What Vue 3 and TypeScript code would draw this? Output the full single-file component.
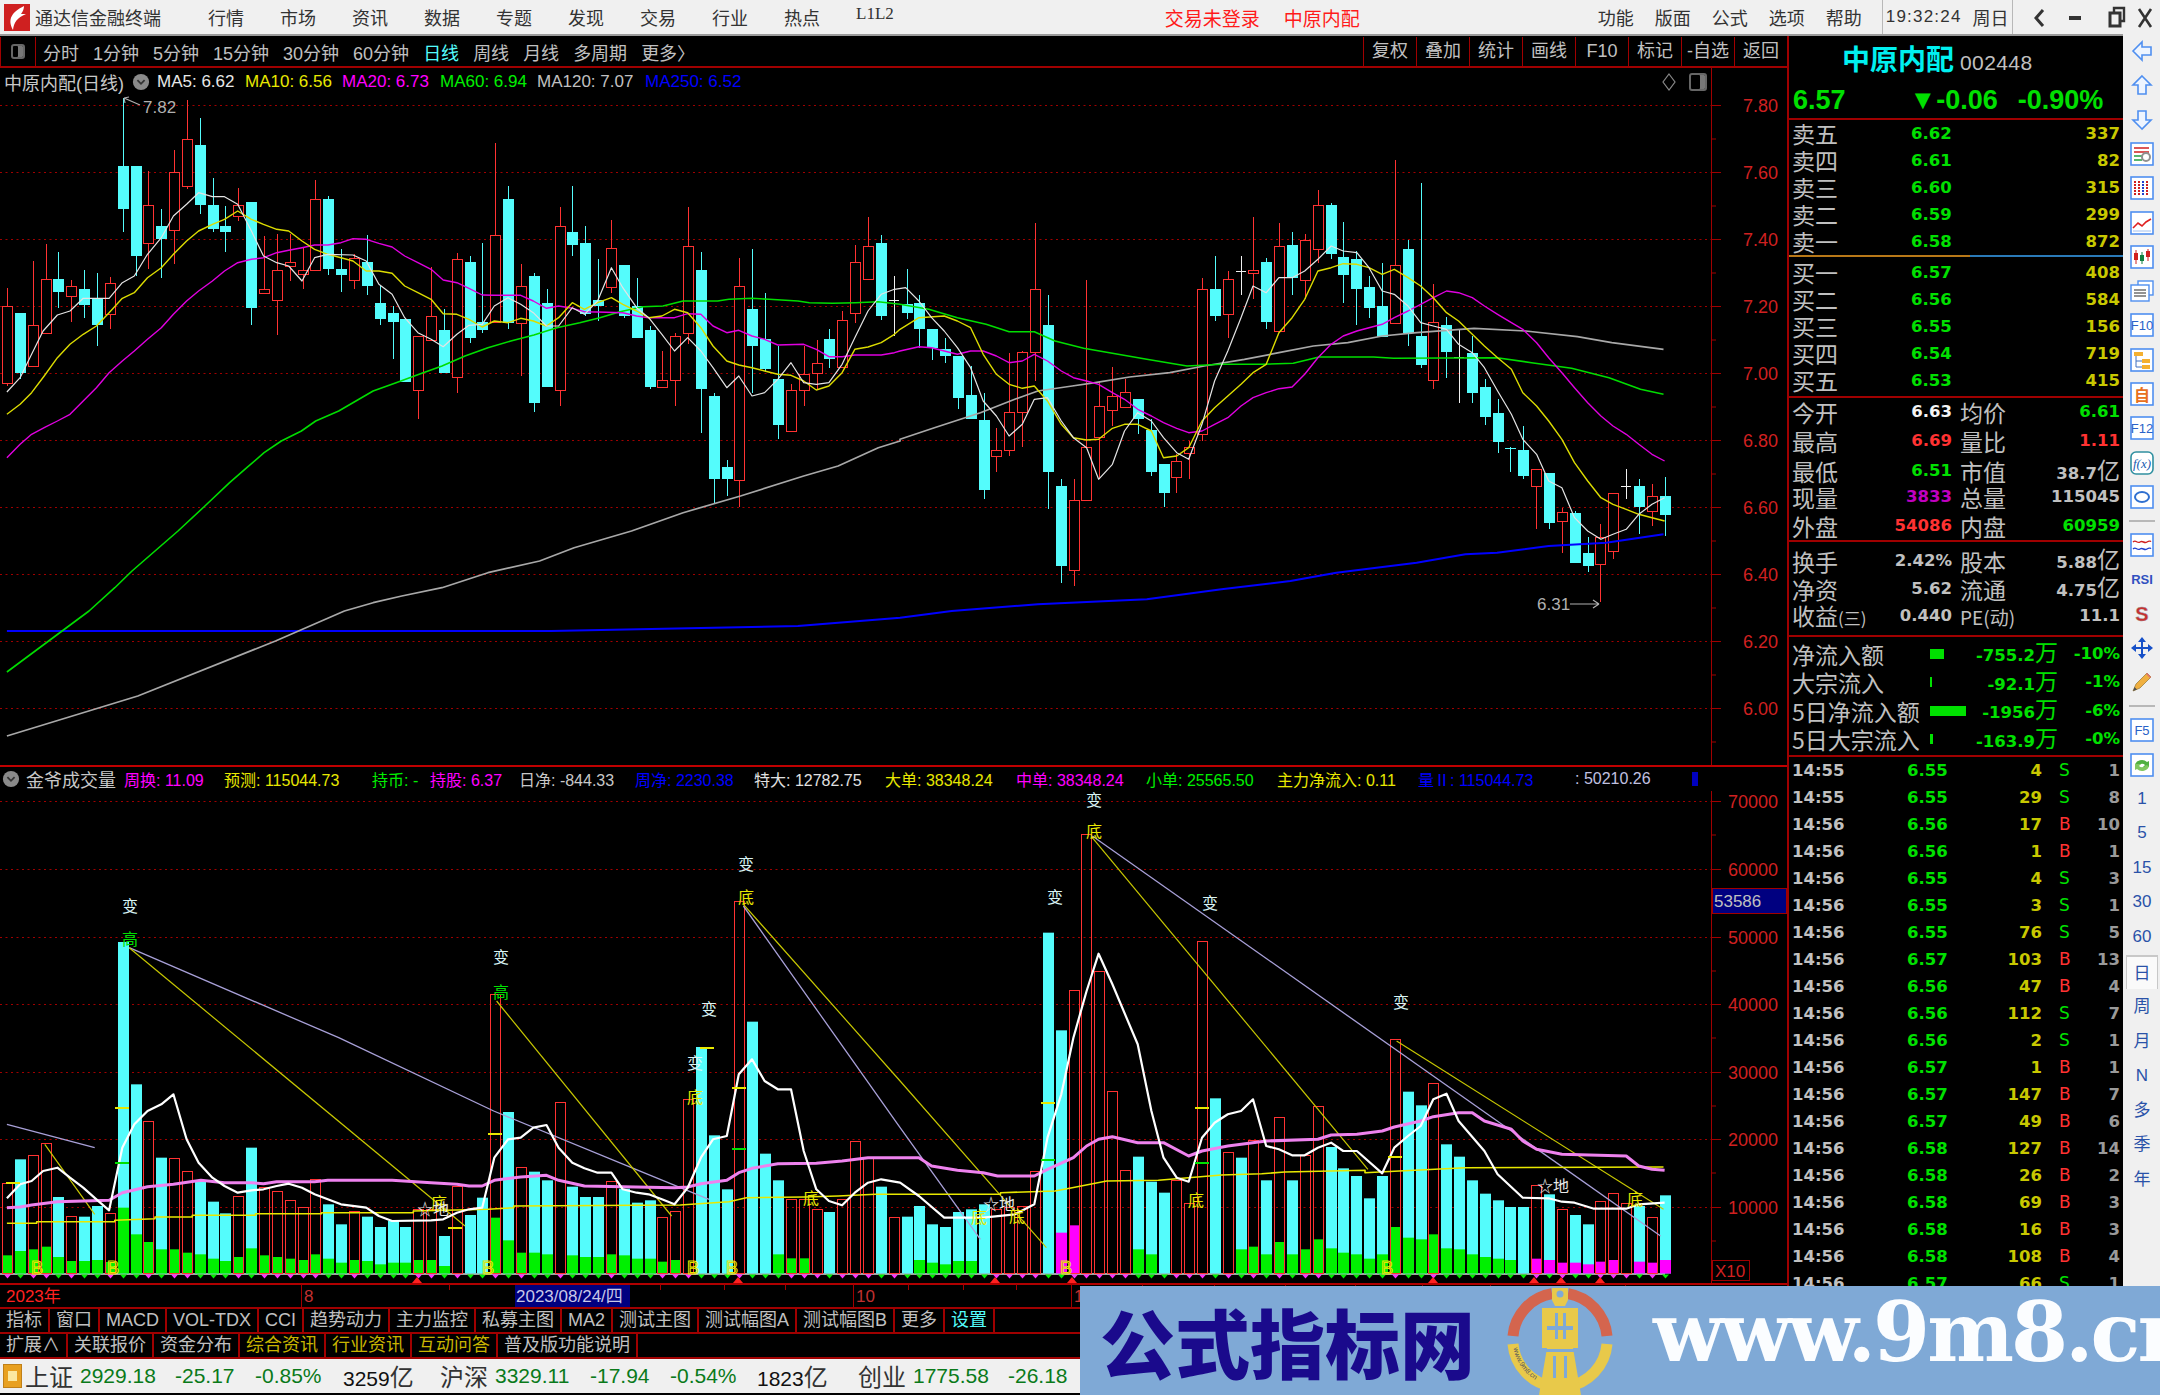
<script setup lang="ts">
// values below were traced off the screenshot crops: x is in 1.742x, y in 3x
const SX = 1.742
const PRICE_BASE = 90
const VOL_BASE = 760

function trace(base: number, left: string, right = ''): string {
  const conv = (s: string, off: number) =>
    s.trim().split(/\s+/).filter(Boolean).map((p) => {
      const [x, y] = p.split(',').map(Number)
      return `${(off + x / SX).toFixed(1)},${(base + y / 3).toFixed(1)}`
    })
  return [...conv(left, 0), ...conv(right, 900)].join(' ')
}

const barX = (i: number) => Math.round(7 + 12.85 * i)
const py = (v: number) => PRICE_BASE + v / 3
const vy = (v: number) => VOL_BASE + v / 3

// high, body top, body bottom, low, kind (0 down, 1 up, 2 doji)
const candleData: number[][] = [
  [590,645,878,885,1],[667,667,845,865,0],[510,703,827,827,1],[460,565,727,730,1],[482,563,603,652,0],
  [568,587,615,692,1],[536,595,643,680,0],[545,623,703,765,0],[558,578,670,715,1],[20,225,355,422,0],
  [225,225,495,555,0],[240,343,458,535,1],[355,405,445,562,0],[177,245,417,520,1],[28,145,287,295,1],
  [82,162,342,370,0],[262,343,413,422,0],[345,405,423,482,0],[290,343,377,390,1],[333,333,652,702,0],
  [435,595,608,610,1],[428,537,628,733,1],[430,515,527,570,1],[470,537,550,595,1],[267,325,538,540,1],
  [315,325,535,552,0],[475,535,553,603,0],[490,503,567,595,1],[432,513,585,612,0],[585,635,683,702,0],
  [645,667,693,805,0],[685,685,873,873,0],[735,735,898,985,1],[528,677,747,750,1],[655,717,847,847,0],
  [487,505,858,905,1],[495,513,742,755,0],[455,692,718,725,0],[157,433,695,695,1],[285,325,695,715,0],
  [518,587,697,855,1],[545,555,935,962,0],[595,635,887,887,0],[348,407,898,945,1],[285,423,463,495,0],
  [405,455,670,675,0],[505,627,645,690,0],[388,473,588,605,1],[523,523,675,680,0],[562,645,742,742,0],
  [705,717,887,895,0],[780,867,890,890,1],[725,735,867,945,1],[347,465,728,760,1],[482,537,895,1027,0],
  [905,915,1165,1240,0],[1107,1127,1165,1215,0],[500,587,1168,1247,1],[473,653,765,905,0],[605,745,833,840,0],
  [765,865,1003,1043,0],[880,898,1020,1020,1],[765,850,898,945,1],[748,817,848,895,1],[715,743,803,830,0],
  [660,687,830,830,1],[462,515,668,695,1],[378,465,565,565,1],[433,455,675,687,0],[555,628,628,735,2],
  [535,640,665,685,0],[612,635,715,770,0],[715,715,770,808,0],[740,775,795,815,0],[795,795,922,955,0],
  [825,913,985,985,0],[905,987,1197,1223,0],[1010,1077,1097,1143,1],[785,965,1078,1095,1],[780,785,965,1068,1],
  [397,595,785,870,1],[613,703,1143,1255,0],[1165,1185,1425,1477,0],[1163,1227,1438,1485,1],[568,1070,1227,1227,1],
  [870,947,1038,1165,1],[828,915,957,1005,1],[865,905,948,950,1],[923,923,985,1030,0],[985,1018,1143,1155,0],
  [1118,1118,1205,1247,0],[1090,1110,1160,1205,1],[1050,1068,1088,1165,1],[560,595,1030,1050,1],[495,595,675,690,0],
  [540,565,670,742,1],[495,540,540,612,2],[378,537,548,625,1],[500,513,693,715,0],[397,465,720,720,1],
  [423,463,560,612,0],[428,447,567,625,1],[297,343,475,515,1],[335,343,490,503,0],[392,497,553,635,0],
  [480,505,593,702,0],[555,587,652,682,0],[515,645,737,737,0],[207,523,697,697,1],[447,473,727,765,0],
  [275,735,823,830,0],[580,695,867,895,1],[677,703,783,862,0],[718,800,800,935,2],[735,785,905,935,0],
  [865,887,977,1003,0],[925,965,1053,1085,0],[1068,1070,1075,1143,0],[1005,1077,1155,1165,0],[1135,1135,1187,1313,1],
  [1145,1145,1295,1313,0],[1250,1265,1290,1387,1],[1260,1265,1417,1417,0],[1337,1387,1425,1443,0],[1300,1340,1420,1533,1],
  [1207,1207,1380,1403,1],[1135,1185,1185,1225,2],[1165,1185,1247,1328,0],[1180,1217,1260,1305,1],[1157,1215,1273,1335,0],
]

const candles = candleData.map(([hi, top, bot, lo, kind], i) => ({
  x: barX(i),
  hi: py(hi),
  top: py(top),
  h: Math.max(py(bot) - py(top), 1),
  lo: py(lo),
  kind,
}))

// bar top, kind (0 cyan, 1 red), inner block top (negative = magenta, 0 = none)
const volData: number[][] = [
  [1268,1,1483],[1195,0,1470],[1183,1,1465],[1147,1,1457],[1308,0,1488],[1367,1,1500],[1367,0,1500],[1335,0,1497],[1358,1,1503],[543,0,1340],
  [970,0,1420],[1080,1,1443],[1190,0,1465],[1192,1,1465],[1232,1,1475],[1262,0,1480],[1322,0,1493],[1357,0,1500],[1305,1,1488],[1160,0,1462],
  [1280,1,1483],[1292,1,1488],[1318,1,1493],[1340,1,1497],[1255,1,1480],[1330,0,1493],[1390,0,1505],[1350,1,1497],[1367,0,1500],[1398,0,1510],
  [1380,0,1505],[1398,0,1505],[1345,1,1497],[1345,1,1497],[1425,0,1515],[1275,1,0],[1362,0,0],[1310,0,0],[700,1,1370],[1053,0,1438],
  [1220,1,1475],[1232,0,1475],[1258,0,1480],[1025,1,0],[1277,0,1483],[1308,0,1488],[1308,0,1488],[1260,1,1480],[1283,0,1483],[1325,0,1493],
  [1318,0,1493],[1368,1,1502],[1350,1,1497],[1015,1,0],[858,0,0],[1123,0,0],[1285,0,0],[422,1,0],[782,0,0],[1178,0,0],
  [1258,0,1480],[1315,1,1492],[1315,1,1492],[1345,1,0],[1353,0,0],[1315,1,0],[1142,1,0],[1190,1,0],[1277,0,0],[1368,1,0],
  [1367,0,0],[1335,0,1497],[1390,0,1505],[1398,0,1510],[1353,0,1500],[1345,0,1500],[1330,0,0],[1345,1,0],[1340,1,0],[1335,1,0],
  [1232,1,0],[515,0,0],[808,0,-1415],[687,1,-1393],[220,1,0],[630,1,0],[990,1,0],[1228,1,0],[1187,0,1465],[1262,0,1480],
  [1295,0,0],[1258,1,0],[1328,1,0],[540,1,0],[1012,0,0],[1175,1,0],[1190,0,1465],[1138,1,1457],[1258,0,1480],[1070,1,1443],
  [1258,0,1480],[1182,1,1465],[1035,1,1435],[1158,0,1462],[1222,0,1475],[1245,0,1480],[1312,0,1493],[1245,0,1480],[835,1,1398],[992,0,1430],
  [1033,0,1435],[967,1,1420],[1150,0,1462],[1187,0,1465],[1258,0,1480],[1298,0,1488],[1318,0,1493],[1338,0,1497],[1338,0,0],[1272,1,-1493],
  [1300,0,-1497],[1345,1,-1505],[1362,0,-1505],[1390,0,-1510],[1322,1,-1502],[1296,1,-1497],[1328,1,0],[1335,0,-1502],[1368,1,-1505],[1303,0,-1497],
]

const VOL_ZERO = 1272.5
const volBars = volData.map(([top, kind, inner], i) => ({
  x: barX(i),
  y: vy(top),
  h: VOL_ZERO - vy(top),
  kind,
  innerY: inner ? vy(Math.abs(inner)) : 0,
  innerH: inner ? VOL_ZERO - vy(Math.abs(inner)) : 0,
  innerColor: inner < 0 ? '#ff00ff' : '#00f000',
}))

const ma5 = trace(PRICE_BASE,
  '12,903 35,860 55,790 75,720 100,672 122,660 145,622 190,622 213,575 234,555 257,490 281,440 302,375 325,340 346,305 370,317 391,317 414,340 438,420 459,495 482,515 503,525 526,570 548,500 571,490 615,492 638,510 660,580 683,610 705,680 728,725 751,745 772,767 796,730 817,703 840,700 861,645 885,620 907,640 929,665 952,705 973,705 997,650 1018,670 1041,630 1065,530 1085,590 1109,650 1130,680 1153,730 1175,780 1198,740 1221,780 1242,830 1266,890 1287,855 1310,915 1332,905 1355,865 1378,815 1400,875 1422,880 1444,875 1467,820 1489,740 1512,660 1535,610 1558,595',
  '10,590 33,630 55,680 77,720 100,770 123,830 145,930 168,975 190,1035 213,1000 234,925 257,920 281,990 302,1040 325,1070 346,1165 370,1120 391,1020 414,965 438,990 459,1040 482,1085 503,1105 526,1000 548,870 571,780 594,680 615,585 638,605 660,560 683,560 705,540 728,505 751,465 772,480 796,485 817,530 840,600 861,610 885,645 907,695 929,705 952,715 973,760 997,785 1018,830 1041,900 1065,970 1085,1045 1109,1090 1130,1170 1153,1190 1175,1280 1198,1320 1221,1345 1242,1330 1265,1315 1287,1270 1310,1240 1332,1220')
const ma10 = trace(PRICE_BASE,
  '12,970 35,940 55,905 77,855 100,800 122,760 145,730 168,705 190,665 213,622 234,605 257,560 281,530 302,490 325,450 346,420 370,400 391,385 414,360 438,385 459,400 482,415 503,420 526,450 548,475 571,490 594,500 615,510 638,540 660,540 683,547 705,585 728,605 751,625 772,668 796,670 817,685 840,708 861,690 885,695 907,682 929,690 952,705 973,680 997,635 1018,655 1041,635 1065,620 1085,640 1109,660 1130,680 1153,675 1175,655 1198,665 1221,710 1242,765 1266,810 1287,822 1310,830 1332,840 1355,850 1378,853 1400,870 1422,897 1444,885 1467,845 1489,775 1512,768 1535,755 1558,730',
  '0,715 33,680 77,675 100,690 123,710 145,790 168,850 190,880 213,892 234,885 257,930 281,1000 302,1040 325,1047 346,1045 370,1012 391,1000 414,1000 438,1020 459,1100 482,1095 503,1070 526,990 548,950 571,915 594,880 615,845 638,820 660,725 683,680 705,625 728,540 751,530 772,518 796,520 817,530 840,550 861,535 885,560 907,585 929,620 952,665 973,690 997,730 1018,765 1041,800 1065,835 1085,905 1109,945 1130,990 1153,1045 1175,1115 1198,1170 1221,1220 1242,1240 1265,1255 1287,1270 1310,1280 1332,1290')
const ma20 = trace(PRICE_BASE,
  '12,1100 35,1060 55,1030 77,1010 100,990 122,970 145,930 168,890 190,845 213,810 234,780 257,745 281,710 302,670 325,630 346,600 370,570 391,540 414,515 438,505 459,500 482,485 503,478 526,470 548,462 571,462 594,455 615,443 638,445 660,457 683,468 705,495 728,515 751,535 772,567 796,575 817,592 840,612 861,613 907,613 929,630 952,652 973,645 997,652 1018,662 1041,663 1085,665 1109,675 1130,680 1175,680 1198,668 1221,670 1242,705 1266,725 1287,718 1310,735 1332,745 1355,762 1400,760 1422,775 1444,797 1467,797 1489,792 1535,792 1558,785',
  '0,780 33,767 55,770 77,780 100,790 123,780 145,780 168,795 190,815 213,810 234,790 257,810 281,840 302,860 325,870 346,880 370,905 391,925 414,955 438,975 459,995 482,1012 503,1025 526,1020 548,1000 571,980 594,945 615,920 638,905 660,893 683,888 705,850 728,800 751,760 772,735 796,720 817,710 840,700 861,680 885,660 907,640 929,620 952,600 973,605 997,620 1018,645 1041,670 1065,695 1085,715 1109,755 1130,800 1153,845 1175,890 1198,935 1221,975 1242,1005 1265,1030 1287,1060 1310,1090 1332,1110')
const ma60 = trace(PRICE_BASE,
  '12,1743 155,1560 200,1490 230,1440 270,1380 310,1320 357,1245 400,1175 430,1130 460,1085 490,1050 525,1020 550,990 590,960 620,930 650,900 690,875 730,850 770,825 810,795 850,770 890,750 930,732 970,710 1010,695 1045,680 1080,662 1120,647 1155,645 1190,630 1250,630 1270,625 1310,622 1340,625 1390,630 1410,635 1450,637 1490,635 1530,632 1568,640',
  '0,640 50,655 100,680 150,700 190,722 234,722 270,750 320,772 380,790 430,805 500,825 560,820 630,820 685,817 730,798 825,798 860,802 1040,800 1100,815 1170,832 1235,860 1290,895 1330,910')
const ma120 = trace(PRICE_BASE,
  '12,1935 240,1815 480,1650 600,1560 650,1535 700,1515 770,1490 850,1445 940,1410 1000,1370 1100,1320 1190,1265 1290,1215 1400,1155 1460,1125 1530,1070 1568,1050',
  '0,1045 60,1010 140,965 200,925 240,900 300,885 340,875 400,858 470,845 530,825 600,805 660,785 720,765 780,755 840,735 900,725 1000,712 1090,720 1180,737 1240,755 1330,775')
const ma250 = trace(PRICE_BASE,
  '12,1620 960,1620 1390,1605 1568,1580',
  '90,1560 240,1540 430,1525 560,1495 680,1470 760,1445 900,1415 985,1390 1040,1385 1130,1365 1230,1355 1330,1330')

const volWhite = trace(VOL_BASE,
  '12,1312 35,1270 55,1260 75,1230 100,1220 122,1250 145,1280 168,1315 190,1348 213,1160 234,1090 257,1050 281,1030 302,1000 325,1135 346,1205 370,1250 391,1275 414,1295 438,1288 459,1285 482,1275 503,1268 526,1280 548,1300 571,1315 594,1330 638,1340 660,1365 683,1380 751,1378 772,1375 796,1355 817,1345 840,1340 861,1190 885,1135 907,1130 929,1100 952,1092 973,1160 997,1205 1018,1222 1041,1235 1065,1235 1085,1285 1109,1295 1130,1300 1153,1315 1175,1330 1198,1280 1221,1190 1242,1135 1266,1125 1287,940 1310,895 1332,960 1355,985 1378,985 1400,1170 1422,1285 1444,1320 1467,1333 1489,1295 1512,1265 1535,1255 1568,1265',
  '33,1305 77,1370 145,1370 200,1360 234,1330 257,1130 281,1000 302,830 325,690 346,578 370,670 414,850 438,1050 459,1190 482,1250 503,1262 526,1130 548,1085 571,1060 594,1050 615,1015 638,1155 660,1165 683,1183 705,1183 728,1160 751,1145 772,1170 796,1170 840,1237 861,1160 885,1125 907,1095 929,1015 952,998 973,1080 1018,1170 1041,1240 1085,1310 1130,1312 1153,1322 1175,1325 1209,1343 1265,1343 1287,1330 1332,1325')
const volPink = trace(VOL_BASE,
  '12,1340 35,1338 55,1332 100,1322 190,1318 213,1295 257,1277 302,1270 350,1258 391,1265 438,1265 459,1268 482,1262 548,1262 571,1258 683,1258 751,1265 796,1270 817,1275 840,1275 861,1258 907,1248 952,1243 973,1258 1018,1275 1175,1280 1198,1278 1221,1268 1266,1258 1287,1235 1310,1222 1355,1208 1422,1207 1467,1200 1512,1190 1568,1190',
  '33,1190 55,1215 100,1228 145,1235 170,1245 234,1245 257,1225 302,1190 325,1155 346,1135 370,1127 414,1145 459,1145 503,1185 526,1170 571,1155 638,1140 728,1135 751,1122 796,1120 840,1110 861,1098 907,1080 929,1067 973,1055 997,1055 1018,1080 1065,1105 1085,1140 1109,1165 1153,1180 1265,1185 1287,1215 1310,1225 1332,1228')
const volStep = trace(VOL_BASE,
  '12,1387 64,1387 64,1382 200,1382 200,1378 270,1373 270,1368 335,1368 335,1363 445,1363 445,1358 560,1358 560,1355 720,1355 720,1350 850,1345 895,1340 895,1335 1185,1332 1270,1322 1300,1310 1400,1308 1460,1305 1525,1300 1568,1300',
  '175,1300 175,1295 270,1290 300,1280 360,1260 450,1258 560,1242 630,1238 670,1233 810,1228 810,1235 870,1230 985,1220 1330,1218')

const lavender = [
  trace(VOL_BASE, '12,1090 165,1160'),
  trace(VOL_BASE, '225,560 590,830 860,1050 1100,1220 1235,1315'),
  trace(VOL_BASE, '1295,435 1568,1100', '140,1435'),
  trace(VOL_BASE, '', '335,225 1325,1425'),
]
const diagonals = [
  trace(VOL_BASE, '78,1150 165,1360'),
  trace(VOL_BASE, '225,560 810,1395'),
  trace(VOL_BASE, '865,720 1170,1365'),
  trace(VOL_BASE, '1295,430 1568,960', '255,1460'),
  trace(VOL_BASE, '', '335,230 815,1225'),
  trace(VOL_BASE, '', '865,840 1330,1345'),
]

const priceGrid = [
  ['7.80', 104.5], ['7.60', 171.5], ['7.40', 238.5], ['7.20', 305.5], ['7.00', 372.5],
  ['6.80', 439.5], ['6.60', 506.5], ['6.40', 573.5], ['6.20', 640.5], ['6.00', 707.5],
] as [string, number][]

const volGrid = [
  ['70000', 800.5], ['60000', 868.5], ['50000', 936.5], ['40000', 1003.5],
  ['30000', 1071.5], ['20000', 1138.5], ['10000', 1206.5],
] as [string, number][]

const notes: [string, number, number, string][] = [
  ['变', 130, 905, 'n-w'], ['高', 130, 938, 'n-g'], ['变', 501, 956, 'n-w'], ['高', 501, 991, 'n-g'],
  ['变', 709, 1008, 'n-w'], ['变', 695, 1062, 'n-w'], ['底', 695, 1096, 'n-y'], ['变', 746, 863, 'n-w'],
  ['底', 746, 896, 'n-y'], ['底', 439, 1202, 'n-y'], ['☆地', 433, 1208, 'n-l'], ['底', 811, 1197, 'n-y'],
  ['变', 1094, 799, 'n-w'], ['底', 1094, 830, 'n-y'], ['变', 1055, 896, 'n-w'], ['变', 1210, 902, 'n-w'],
  ['变', 1401, 1001, 'n-w'], ['底', 979, 1216, 'n-y'], ['☆地', 999, 1203, 'n-l'], ['底', 1017, 1215, 'n-y'],
  ['底', 1196, 1199, 'n-y'], ['☆地', 1553, 1185, 'n-l'], ['底', 1635, 1198, 'n-y'],
]
const bMarks = [37, 113, 488, 693, 732, 1066, 1387]
const upMarks = [417, 738, 995, 1072, 1433, 1534, 1561, 1600]

const dashes: [number, number, string][] = [
  [115, 1107, '#e8e800'], [115, 1162, '#00e000'], [488, 1133, '#e8e800'], [6, 1182, '#e8e800'],
  [448, 1227, '#e8e800'], [700, 1047, '#e8e800'], [732, 1087, '#e8e800'], [732, 1148, '#00e000'],
  [1041, 1102, '#e8e800'], [1041, 1159, '#00e000'], [1195, 1107, '#e8e800'], [1195, 1162, '#00e000'],
  [1388, 1156, '#e8e800'],
]

const dateTicks = [449, 660, 724, 785, 908, 963, 1016, 1142, 1214, 1285, 1355, 1422, 1490, 1625]

const menus = ['行情', '市场', '资讯', '数据', '专题', '发现', '交易', '行业', '热点']
const sysMenus = ['功能', '版面', '公式', '选项', '帮助']
const periods = ['分时', '1分钟', '5分钟', '15分钟', '30分钟', '60分钟', '日线', '周线', '月线', '多周期', '更多〉']
const tools = ['复权', '叠加', '统计', '画线', 'F10', '标记', '-自选', '返回']

const maLegend = [
  { text: 'MA5: 6.62', w: 88, color: '#e8e8e8' },
  { text: 'MA10: 6.56', w: 97, color: '#e8e800' },
  { text: 'MA20: 6.73', w: 98, color: '#ff00ff' },
  { text: 'MA60: 6.94', w: 97, color: '#00f000' },
  { text: 'MA120: 7.07', w: 108, color: '#c0c0c0' },
  { text: 'MA250: 6.52', w: 100, color: '#0000ff' },
]
const volLegend = [
  { text: '周换: 11.09', w: 100, color: '#ff00ff' },
  { text: '预测: 115044.73', w: 148, color: '#e8e800' },
  { text: '持币: -', w: 58, color: '#00f000' },
  { text: '持股: 6.37', w: 89, color: '#ff00ff' },
  { text: '日净: -844.33', w: 116, color: '#c8c8c8' },
  { text: '周净: 2230.38', w: 119, color: '#0000ff' },
  { text: '特大: 12782.75', w: 131, color: '#e0e0e0' },
  { text: '大单: 38348.24', w: 131, color: '#e8e800' },
  { text: '中单: 38348.24', w: 130, color: '#ff00ff' },
  { text: '小单: 25565.50', w: 131, color: '#00f000' },
  { text: '主力净流入: 0.11', w: 141, color: '#e8e800' },
  { text: '量Ⅱ: 115044.73', w: 157, color: '#0000ff' },
  { text: ': 50210.26', w: 100, color: '#c0c0e0' },
]

const tabsOne = [
  { t: '指标' }, { t: '窗口' }, { t: 'MACD' }, { t: 'VOL-TDX' }, { t: 'CCI' }, { t: '趋势动力' }, { t: '主力监控' },
  { t: '私募主图' }, { t: 'MA2' }, { t: '测试主图' }, { t: '测试幅图A' }, { t: '测试幅图B' }, { t: '更多' }, { t: '设置', c: 'cyan' },
]
const tabsTwo = [
  { t: '扩展∧' }, { t: '关联报价' }, { t: '资金分布' }, { t: '综合资讯', c: 'gold' }, { t: '行业资讯', c: 'gold' },
  { t: '互动问答', c: 'gold' }, { t: '普及版功能说明' },
]

const sells = [
  ['卖五', '6.62', '337'], ['卖四', '6.61', '82'], ['卖三', '6.60', '315'], ['卖二', '6.59', '299'], ['卖一', '6.58', '872'],
]
const buys = [
  ['买一', '6.57', '408'], ['买二', '6.56', '584'], ['买三', '6.55', '156'], ['买四', '6.54', '719'], ['买五', '6.53', '415'],
]
const stats = [
  ['今开', '6.63', 'white', '均价', '6.61', 'green', ''],
  ['最高', '6.69', 'red', '量比', '1.11', 'red', ''],
  ['最低', '6.51', 'green', '市值', '38.7', 'gray', '亿'],
  ['现量', '3833', 'purple', '总量', '115045', 'gray', ''],
  ['外盘', '54086', 'red', '内盘', '60959', 'green', ''],
]
const finance = [
  ['换手', '2.42%', '股本', '5.88', '亿'],
  ['净资', '5.62', '流通', '4.75', '亿'],
]
const flows = [
  { label: '净流入额', bar: 14, val: '-755.2', pct: '-10%' },
  { label: '大宗流入', bar: 2, val: '-92.1', pct: '-1%' },
  { label: '5日净流入额', bar: 36, val: '-1956', pct: '-6%' },
  { label: '5日大宗流入', bar: 3, val: '-163.9', pct: '-0%' },
]
const trades: [string, string, string, string, string][] = [
  ['14:55', '6.55', '4', 'S', '1'], ['14:55', '6.55', '29', 'S', '8'], ['14:56', '6.56', '17', 'B', '10'],
  ['14:56', '6.56', '1', 'B', '1'], ['14:56', '6.55', '4', 'S', '3'], ['14:56', '6.55', '3', 'S', '1'],
  ['14:56', '6.55', '76', 'S', '5'], ['14:56', '6.57', '103', 'B', '13'], ['14:56', '6.56', '47', 'B', '4'],
  ['14:56', '6.56', '112', 'S', '7'], ['14:56', '6.56', '2', 'S', '1'], ['14:56', '6.57', '1', 'B', '1'],
  ['14:56', '6.57', '147', 'B', '7'], ['14:56', '6.57', '49', 'B', '6'], ['14:56', '6.58', '127', 'B', '14'],
  ['14:56', '6.58', '26', 'B', '2'], ['14:56', '6.58', '69', 'B', '3'], ['14:56', '6.58', '16', 'B', '3'],
  ['14:56', '6.58', '108', 'B', '4'], ['14:56', '6.57', '66', 'S', '1'],
]

const frame = '<rect x="1" y="1" width="22" height="22" fill="#fff" stroke="#4f8ff0" stroke-width="1.6"/>'
const iconText = (t: string, c = '#2a62c8') =>
  frame + `<text x="12" y="17" text-anchor="middle" font-family="Liberation Sans" font-size="13" fill="${c}">${t}</text>`
const iconsTop = [
  '<path d="M3 12 12 3v5h9v8h-9v5z" fill="#eef5ff" stroke="#4f8ff0" stroke-width="1.6"/>',
  '<path d="M12 3 21 12h-5v9H8v-9H3z" fill="#eef5ff" stroke="#4f8ff0" stroke-width="1.6"/>',
  '<path d="M12 21 3 12h5V3h8v9h5z" fill="#eef5ff" stroke="#4f8ff0" stroke-width="1.6"/>',
  frame + '<path d="M4 6h15M4 10h15" stroke="#d02020" stroke-width="1.6"/><path d="M4 14h8M4 18h8" stroke="#20a040" stroke-width="1.6"/><circle cx="16" cy="15" r="4" fill="none" stroke="#909090" stroke-width="2"/>',
  frame + '<path d="M5 5v14M9 5v14" stroke="#d02020" stroke-width="2" stroke-dasharray="2 1"/><path d="M13 5v14" stroke="#2040d0" stroke-width="2" stroke-dasharray="2 1"/><path d="M17 5v14" stroke="#d02020" stroke-width="2" stroke-dasharray="2 1"/>',
  frame + '<path d="M3 17 8 12l4 3 4-4 5-3" fill="none" stroke="#e02020" stroke-width="1.6"/><path d="M3 20h18" stroke="#a0c0f0"/>',
  frame + '<path d="M6 5v14M18 4v12" stroke="#d02020"/><path d="M12 7v12" stroke="#108040"/><rect x="4" y="8" width="4" height="7" fill="#d02020"/><rect x="10" y="10" width="4" height="6" fill="#108040"/><rect x="16" y="6" width="4" height="6" fill="#d02020"/>',
  '<rect x="8" y="2" width="15" height="14" fill="#fff" stroke="#4f8ff0" stroke-width="1.4"/><rect x="1" y="6" width="18" height="16" fill="#fff" stroke="#4f8ff0" stroke-width="1.4"/><path d="M4 11h12M4 14h12M4 17h12" stroke="#707070" stroke-width="1.5"/>',
  iconText('F10'),
  frame + '<rect x="4" y="4" width="9" height="4" fill="#f4b030"/><rect x="12" y="11" width="8" height="4" fill="#f4b030"/><rect x="12" y="17" width="8" height="4" fill="#f4b030"/><path d="M6 8v11h6M6 13h6" fill="none" stroke="#4070c0"/>',
  frame + '<text x="12" y="19" text-anchor="middle" font-family="Noto Sans CJK SC" font-size="16" font-weight="700" fill="#e87020">自</text>',
  iconText('F12'),
  '<rect x="1" y="1" width="22" height="22" rx="5" fill="#fff" stroke="#3090a0" stroke-width="1.6"/><text x="12" y="17" text-anchor="middle" font-family="Liberation Serif" font-size="13" fill="#205cb0" font-style="italic">f(x)</text>',
  frame + '<ellipse cx="12" cy="12" rx="7" ry="5" fill="none" stroke="#3070d0" stroke-width="2"/>',
]
const iconsMid = [
  frame + '<path d="M3 9c3-3 4 2 7 0s4 2 7 0 3 0 4-1" fill="none" stroke="#d02020" stroke-width="1.4"/><path d="M3 16c3-3 4 2 7 0s4 2 7 0 3 0 4-1" fill="none" stroke="#2040d0" stroke-width="1.4"/>',
  '<text x="12" y="17" text-anchor="middle" font-family="Liberation Sans" font-size="13" font-weight="700" fill="#3050c0">RSI</text>',
  '<text x="12" y="19" text-anchor="middle" font-family="Liberation Sans" font-size="20" font-weight="700" fill="#c83030" stroke="#a0a0a0" stroke-width=".4">S</text>',
  '<path d="M12 1l4 5h-3v5h5V8l5 4-5 4v-3h-5v5h3l-4 5-4-5h3v-5H6v3l-5-4 5-4v3h5V6H8z" fill="#1650c8"/>',
  '<path d="M3 21 6 14 17 3l4 4L10 18z" fill="#f0b040" stroke="#a08040" stroke-width=".8"/><path d="M16 4l4 4 1-1-4-4z" fill="#e07070"/><path d="M3 21l1.6-4 2.4 2.4z" fill="#505050"/>',
]
const iconsEnd = [
  iconText('F5'),
  frame + '<path d="M5 12a7 6 0 0 1 12-3l2-1v6h-6l2-2a4 3 0 0 0-7 1z" fill="#50b040"/><path d="M19 13a7 6 0 0 1-12 3l-2 1v-6h6l-2 2a4 3 0 0 0 7-1z" fill="#80c860"/>',
]
const sideLabels = ['1', '5', '15', '30', '60']
const sideDays = ['周', '月', 'N', '多', '季', '年']

const status = [
  { t: '2929.18', c: 'up', w: 95 }, { t: '-25.17', c: 'up', w: 80 }, { t: '-0.85%', c: 'up', w: 88 },
  { t: '3259', c: 'k', u: '亿', w: 94 },
]
const status2 = [
  { t: '3329.11', c: 'up', w: 95 }, { t: '-17.94', c: 'up', w: 80 }, { t: '-0.54%', c: 'up', w: 87 },
  { t: '1823', c: 'k', u: '亿', w: 98 },
]
</script>

<template>
  <div class="screen">
    <header class="menubar">
      <svg class="logo" viewBox="0 0 26 27">
        <rect width="26" height="27" fill="#cf2020" />
        <path d="M20 2 C8 8 3 15 9 26 C10 18 13 14 22 10 L17 10 C19 7 20 5 20 2Z" fill="#fff" />
      </svg>
      <span class="app-title">通达信金融终端</span>
      <nav class="menus">
        <span v-for="m in menus" :key="m">{{ m }}</span>
        <span class="l2">L1L2</span>
      </nav>
      <span class="notice first">交易未登录</span>
      <span class="notice second">中原内配</span>
      <nav class="sys-menus">
        <span v-for="m in sysMenus" :key="m">{{ m }}</span>
      </nav>
      <div class="clock">
        <span class="time">19:32:24</span>
        <span>周日</span>
      </div>
      <div class="win-ctl">
        <svg viewBox="0 0 140 34" width="140" height="34">
          <path d="M30 10 23 18 30 26" fill="none" stroke="#333" stroke-width="3" />
          <path d="M56 18H68" stroke="#333" stroke-width="4" />
          <path d="M97 13h10v13H97z" fill="none" stroke="#333" stroke-width="3" />
          <path d="M101 13V8h10v13h-4" fill="none" stroke="#333" stroke-width="2.4" />
          <path d="M134 9 146 27M146 9 134 27" transform="translate(-8 0)" stroke="#333" stroke-width="2.6" />
        </svg>
      </div>
    </header>

    <div class="workspace">
      <section class="chart-col">
        <div class="toolbar">
          <div class="pane-toggle"><i></i></div>
          <div class="periods">
            <span v-for="p in periods" :key="p" :class="{ active: p === '日线' }">{{ p }}</span>
          </div>
          <div class="tools">
            <span v-for="t in tools" :key="t">{{ t }}</span>
          </div>
        </div>

        <div class="legend">
          <span class="legend-title">中原内配(日线)</span>
          <svg class="chev" viewBox="0 0 20 20"><circle cx="10" cy="10" r="9" fill="#8a8a8a" /><path d="M6 8l4 4 4-4" fill="none" stroke="#333" stroke-width="2" /></svg>
          <span v-for="m in maLegend" :key="m.text" class="legend-item" :style="{ width: m.w + 'px', color: m.color }">{{ m.text }}</span>
          <svg class="diamond" viewBox="0 0 14 18"><path d="M7 1 13 9 7 17 1 9Z" fill="none" stroke="#888" stroke-width="1.2" /></svg>
          <div class="pane-toggle-sm"><i></i></div>
        </div>

        <svg class="chart" viewBox="0 95 1787 669" width="1787" height="669">
          <g v-for="g in priceGrid" :key="g[0]">
            <line x1="0" :y1="g[1]" x2="1711" :y2="g[1]" class="grid" />
            <line x1="1711" :y1="g[1]" x2="1721" :y2="g[1]" class="tick" />
            <line x1="1711" :y1="g[1] + 33.5" x2="1716" :y2="g[1] + 33.5" class="tick" />
            <text x="1778" :y="g[1] + 6" class="axis-label">{{ g[0] }}</text>
          </g>
          <line x1="1711.5" y1="95" x2="1711.5" y2="764" class="axis" />

          <g v-for="(c, i) in candles" :key="i">
            <line :x1="c.x + 0.5" :y1="c.hi" :x2="c.x + 0.5" :y2="c.lo" :class="['wick', 'k' + c.kind]" />
            <rect v-if="c.kind === 0" :x="c.x - 5" :y="c.top" width="11" :height="c.h" class="body-down" />
            <rect v-else-if="c.kind === 1" :x="c.x - 4.5" :y="c.top" width="10" :height="c.h" class="body-up" />
            <line v-else :x1="c.x - 5" :y1="c.top" :x2="c.x + 5" :y2="c.top" class="wick k2" />
          </g>

          <polyline :points="ma250" class="ma" stroke="#0000ff" stroke-width="2" />
          <polyline :points="ma120" class="ma" stroke="#a8a8a8" stroke-width="1.7" />
          <polyline :points="ma60" class="ma" stroke="#00dd00" stroke-width="1.6" />
          <polyline :points="ma20" class="ma" stroke="#e000e0" stroke-width="1.4" />
          <polyline :points="ma10" class="ma" stroke="#dcdc00" stroke-width="1.4" />
          <polyline :points="ma5" class="ma" stroke="#e4e4e4" stroke-width="1.2" />

          <path d="M124 97 140 104M124 97l1 5M124 97l5-1" class="pointer" />
          <text x="143" y="112" class="peak-label">7.82</text>
          <text x="1537" y="609" class="peak-label">6.31</text>
          <path d="M1570 603H1599M1599 603l-6-4M1599 603l-6 4" class="pointer" />
        </svg>

        <div class="legend vol">
          <svg class="chev first" viewBox="0 0 20 20"><circle cx="10" cy="10" r="9" fill="#8a8a8a" /><path d="M6 8l4 4 4-4" fill="none" stroke="#333" stroke-width="2" /></svg>
          <span class="legend-name">金爷成交量</span>
          <span v-for="m in volLegend" :key="m.text" class="legend-item" :style="{ width: m.w + 'px', color: m.color }">{{ m.text }}</span>
          <i class="legend-flag"></i>
        </div>

        <svg class="chart" viewBox="0 790 1787 492" width="1787" height="492">
          <g v-for="g in volGrid" :key="g[0]">
            <line x1="0" :y1="g[1]" x2="1711" :y2="g[1]" class="grid" />
            <line x1="1711" :y1="g[1]" x2="1721" :y2="g[1]" class="tick" />
            <line x1="1711" :y1="g[1] + 33.5" x2="1716" :y2="g[1] + 33.5" class="tick" />
            <text x="1778" :y="g[1] + 6" class="axis-label">{{ g[0] }}</text>
          </g>
          <line x1="1711.5" y1="790" x2="1711.5" y2="1282" class="axis" />
          <line x1="0" y1="1273" x2="1665" y2="1273" class="baseline" />

          <g v-for="(b, i) in volBars" :key="i">
            <rect v-if="b.kind === 0" :x="b.x - 5" :y="b.y" width="11" :height="b.h" fill="#54fcfc" />
            <rect v-if="b.innerH" :x="b.x - 5" :y="b.innerY" width="11" :height="b.innerH" :fill="b.innerColor" />
            <rect v-if="b.kind === 1" :x="b.x - 4.5" :y="b.y" width="10" :height="b.h" class="vol-up" />
            <path :d="`M${b.x - 3} 1273.5h7l-3.5 4z`" :fill="b.kind === 0 ? '#00ee00' : '#ff30ff'" />
          </g>

          <polyline v-for="(p, i) in lavender" :key="'l' + i" :points="p" class="ma" stroke="#a8a0d8" stroke-width="1.3" />
          <polyline v-for="(p, i) in diagonals" :key="'d' + i" :points="p" class="ma" stroke="#c8c800" stroke-width="1.2" />
          <polyline :points="volStep" class="ma" stroke="#e8e800" stroke-width="1.6" />
          <polyline :points="volPink" class="ma" stroke="#ee82ee" stroke-width="3" />
          <polyline :points="volWhite" class="ma" stroke="#ffffff" stroke-width="2.2" />

          <line v-for="(d, i) in dashes" :key="'s' + i" :x1="d[0]" :y1="d[1]" :x2="d[0] + 14" :y2="d[1]" :stroke="d[2]" stroke-width="2" />
          <text v-for="(n, i) in notes" :key="'n' + i" :x="n[1]" :y="n[2] + 6" :class="['note', n[3]]">{{ n[0] }}</text>
          <text v-for="x in bMarks" :key="'b' + x" :x="x" y="1273" class="b-mark">B</text>
          <path v-for="x in upMarks" :key="'u' + x" :d="`M${x} 1276l5 6h-10z`" fill="#ff2020" />

          <rect x="1712.5" y="887.5" width="74" height="25" class="cur-box" />
          <text x="1714" y="906" class="cur-text">53586</text>
          <rect x="1712.5" y="1259.5" width="37" height="20" class="x-box" />
          <text x="1715" y="1276" class="axis-x">X10</text>
        </svg>

        <svg class="date-axis" viewBox="0 1282 1787 24" width="1787" height="24">
          <rect x="515" y="1284" width="115" height="22" fill="#000080" />
          <line x1="0" y1="1283" x2="1787" y2="1283" class="date-line" />
          <line v-for="x in dateTicks" :key="x" :x1="x + 0.5" y1="1283" :x2="x + 0.5" y2="1289" class="tick" />
          <line x1="301.5" y1="1283" x2="301.5" y2="1306" class="tick" />
          <line x1="853.5" y1="1283" x2="853.5" y2="1306" class="tick" />
          <line x1="1071.5" y1="1283" x2="1071.5" y2="1306" class="tick" />
          <text x="6" y="1301" class="date-year">2023年</text>
          <text x="304" y="1301" class="date-mark">8</text>
          <text x="516" y="1301" class="date-cur">2023/08/24/四</text>
          <text x="856" y="1301" class="date-mark">10</text>
          <text x="1074" y="1301" class="date-mark">1</text>
        </svg>

        <div class="tab-row">
          <span v-for="t in tabsOne" :key="t.t" :class="t.c">{{ t.t }}</span>
        </div>
        <div class="tab-row second">
          <span v-for="t in tabsTwo" :key="t.t" :class="t.c">{{ t.t }}</span>
        </div>
      </section>

      <aside class="quote">
        <div class="quote-head">
          <div class="quote-name">
            <b>中原内配</b>
            <span>002448</span>
          </div>
          <div class="quote-price">
            <b>6.57</b>
            <b class="chg">▼-0.06</b>
            <b class="pct">-0.90%</b>
          </div>
        </div>

        <div class="book sell">
          <div v-for="r in sells" :key="r[0]" class="book-row">
            <span class="lbl">{{ r[0] }}</span><span class="num green">{{ r[1] }}</span><span class="num gold right">{{ r[2] }}</span>
          </div>
        </div>
        <div class="book-split"><i></i><i></i></div>
        <div class="book buy">
          <div v-for="r in buys" :key="r[0]" class="book-row">
            <span class="lbl">{{ r[0] }}</span><span class="num green">{{ r[1] }}</span><span class="num gold right">{{ r[2] }}</span>
          </div>
        </div>

        <div class="stats">
          <div v-for="r in stats" :key="r[0]" class="stat-row">
            <span class="lbl">{{ r[0] }}</span>
            <span :class="['num', 'right', r[2]]">{{ r[1] }}</span>
            <span class="lbl">{{ r[3] }}</span>
            <span :class="['num', 'right', r[5]]">{{ r[4] }}<em v-if="r[6]">{{ r[6] }}</em></span>
          </div>
        </div>

        <div class="stats finance">
          <div v-for="r in finance" :key="r[0]" class="stat-row">
            <span class="lbl">{{ r[0] }}</span>
            <span class="num right gray">{{ r[1] }}</span>
            <span class="lbl">{{ r[2] }}</span>
            <span class="num right gray">{{ r[3] }}<em>{{ r[4] }}</em></span>
          </div>
          <div class="stat-row">
            <span class="lbl">收益<small>(三)</small></span>
            <span class="num right gray">0.440</span>
            <span class="lbl"><small class="pe">PE(动)</small></span>
            <span class="num right gray">11.1</span>
          </div>
        </div>

        <div class="flows">
          <div v-for="f in flows" :key="f.label" class="flow-row">
            <span class="lbl">{{ f.label }}</span>
            <span><i class="flow-bar" :style="{ width: f.bar + 'px' }"></i></span>
            <span class="num right green">{{ f.val }}<em>万</em></span>
            <span class="num right green">{{ f.pct }}</span>
          </div>
        </div>

        <div class="trades">
          <div v-for="(t, i) in trades" :key="i" class="trade-row">
            <span class="num gray">{{ t[0] }}</span>
            <span class="num green">{{ t[1] }}</span>
            <span class="num gold right">{{ t[2] }}</span>
            <span :class="['num', 'bs', t[3] === 'B' ? 'red' : 'green']">{{ t[3] }}</span>
            <span class="num right dim">{{ t[4] }}</span>
          </div>
        </div>
      </aside>

      <aside class="side">
        <svg v-for="(ic, i) in iconsTop" :key="i" class="side-icon" viewBox="0 0 24 24" v-html="ic"></svg>
        <div class="side-sep"></div>
        <svg v-for="(ic, i) in iconsMid" :key="'m' + i" class="side-icon" viewBox="0 0 24 24" v-html="ic"></svg>
        <div class="side-sep"></div>
        <svg v-for="(ic, i) in iconsEnd" :key="'e' + i" class="side-icon" viewBox="0 0 24 24" v-html="ic"></svg>
        <span v-for="s in sideLabels" :key="s" class="side-txt">{{ s }}</span>
        <span class="side-txt current">日</span>
        <span v-for="s in sideDays" :key="s" class="side-txt">{{ s }}</span>
      </aside>
    </div>

    <footer class="status">
      <span class="status-chip"><i></i></span>
      <span class="idx">上证</span>
      <span v-for="s in status" :key="s.t" :class="['st', s.c]" :style="{ width: s.w + 'px' }">{{ s.t }}<em v-if="s.u">{{ s.u }}</em></span>
      <span class="idx">沪深</span>
      <span v-for="s in status2" :key="s.t" :class="['st', s.c]" :style="{ width: s.w + 'px' }">{{ s.t }}<em v-if="s.u">{{ s.u }}</em></span>
      <span class="idx">创业</span>
      <span class="st up w95">1775.58</span>
      <span class="st up w80">-26.18</span>
    </footer>

    <div class="watermark">
      <span class="wm-name">公式指标网</span>
      <svg class="wm-logo" viewBox="0 0 110 109" width="110" height="109">
        <g fill="none" stroke-width="11">
          <path d="M8 50A47 47 0 0 1 47 7.7" stroke="#d4654e" />
          <path d="M63 7.7A47 47 0 0 1 102 50" stroke="#d4654e" />
          <path id="wmArc" d="M8 58A47 47 0 0 0 48 100.5" stroke="#e8c94a" />
          <path d="M102 58A47 47 0 0 1 62 100.5" stroke="#e8c94a" />
        </g>
        <g fill="#e8c94a">
          <path d="M47 2h16v12l-3 6H50l-3-6z" />
          <circle cx="55" cy="8" r="3.5" fill="#7fa9d6" />
          <path d="M37 22h36v40H68l8 47H34l8-47h-5z" />
        </g>
        <path d="M42 40h26v4H42zM50 27h3v26h-3zM58 27h3v26h-3zM37 63h36v3H37zM48 70h3v22h-3zM59 70h3v22h-3z" fill="#7fa9d6" />
        <text font-family="Liberation Sans" font-size="7" fill="#5a5a5a"><textPath href="#wmArc" startOffset="4">www.9m8.cn</textPath></text>
      </svg>
      <span class="wm-url">www.9m8.cn</span>
    </div>
  </div>
</template>

<style scoped>
.screen {
  position: relative;
  width: 2160px;
  height: 1395px;
  overflow: hidden;
  background: #000;
  font-family: "Liberation Sans", "Noto Sans CJK SC", sans-serif;
  color: #c0c0c0;
}

.menubar {
  display: flex;
  align-items: center;
  height: 34px;
  background: #f0f0f0;
  border-bottom: 2px solid #9a9a9a;
  font-size: 18px;
  color: #333;
  white-space: nowrap;
}
.logo { width: 26px; height: 27px; margin-left: 4px; }
.app-title { margin-left: 5px; width: 127px; }
.menus { display: flex; gap: 36px; margin-left: 46px; }
.menus .l2 { font-family: "Liberation Serif", serif; font-size: 17px; }
.notice { color: #ff1a1a; font-size: 19px; }
.notice.first { margin-left: 271px; }
.notice.second { margin-left: 24px; }
.sys-menus { display: flex; gap: 21px; margin-left: 238px; }
.clock {
  display: flex;
  align-items: center;
  gap: 11px;
  height: 34px;
  margin-left: 20px;
  padding: 0 3px;
  border-left: 1px solid #b8b8b8;
  border-right: 1px solid #b8b8b8;
}
.time { font-size: 17px; letter-spacing: 1.2px; }
.win-ctl { margin-left: 0; height: 34px; }

.workspace { display: flex; height: 1322px; }

.chart-col {
  width: 1787px;
  border-right: 2px solid #a00000;
  flex: none;
}
.toolbar {
  display: flex;
  align-items: center;
  height: 29px;
  padding-top: 1px;
  border-bottom: 2px solid #a00000;
  font-size: 18px;
  white-space: nowrap;
}
.pane-toggle {
  display: flex;
  align-items: center;
  justify-content: center;
  width: 34px;
  height: 29px;
  border-right: 1px solid #a00000;
  border-left: 1px solid #a00000;
}
.pane-toggle i, .pane-toggle-sm i {
  display: block;
  width: 14px;
  height: 15px;
  border: 2px solid #666;
  border-radius: 3px;
  box-shadow: inset -5px 0 0 #777;
  box-sizing: border-box;
}
.periods { display: flex; gap: 14px; margin-left: 7px; }
.periods .active { color: #54fcfc; }
.tools { display: flex; margin-left: auto; }
.tools span {
  width: 52px;
  height: 29px;
  line-height: 29px;
  text-align: center;
  border-left: 1px solid #a00000;
}

.legend {
  display: flex;
  align-items: center;
  height: 28px;
  width: 1711px;
  border-right: 1px solid #a00000;
  font-size: 17px;
  white-space: nowrap;
}
.legend-title { margin-left: 4px; width: 128px; font-size: 18px; color: #c8c8c8; }
.chev { width: 18px; height: 18px; margin-right: 7px; flex: none; }
.chev.first { margin-left: 2px; margin-right: 6px; }
.legend-item { flex: none; }
.diamond { width: 14px; height: 18px; margin-left: 917px; }
.pane-toggle-sm { margin-left: 13px; }
.pane-toggle-sm i { width: 18px; height: 18px; }
.legend.vol {
  height: 24px;
  border-top: 2px solid #c00000;
  width: 1787px;
  border-right: none;
  font-size: 16px;
}
.legend-name { width: 98px; font-size: 18px; color: #c8c8c8; }
.legend-flag { width: 6px; height: 14px; background: #0000c0; margin-left: 17px; }

.chart, .date-axis { display: block; }
.grid { stroke: #a00000; stroke-dasharray: 2 3.5; stroke-width: 1; }
.axis { stroke: #a00000; stroke-width: 1; }
.tick { stroke: #a00000; stroke-width: 1; }
.axis-label {
  fill: #d02020;
  font-size: 18px;
  text-anchor: end;
}
.wick { stroke-width: 1; shape-rendering: crispEdges; }
.k0 { stroke: #54fcfc; }
.k1 { stroke: #ff3232; }
.k2 { stroke: #f0f0f0; }
.body-down { fill: #54fcfc; shape-rendering: crispEdges; }
.body-up { fill: #000; stroke: #ff3232; stroke-width: 1; shape-rendering: crispEdges; }
.vol-up { fill: none; stroke: #ff3232; stroke-width: 1; shape-rendering: crispEdges; }
.ma { fill: none; stroke-linejoin: round; }
.baseline { stroke: #d8d8d8; stroke-width: 1.5; }
.pointer { fill: none; stroke: #b0b0b0; stroke-width: 1.2; }
.peak-label { fill: #b0b0b0; font-size: 17px; }
.note { font-size: 16px; text-anchor: middle; }
.n-w { fill: #d8f4f4; }
.n-g { fill: #00e000; }
.n-y { fill: #e8e800; }
.n-l { fill: #e8e8e8; }
.b-mark { fill: none; stroke: #e8e800; stroke-width: 1; font-size: 18px; text-anchor: middle; }
.cur-box { fill: #000080; stroke: #a00000; }
.x-box { fill: none; stroke: #a00000; }
.cur-text { fill: #c0c0c0; font-size: 17px; }
.axis-x { fill: #d02020; font-size: 17px; }

.date-line { stroke: #b00000; stroke-width: 2; }
.date-year { fill: #ff2020; font-size: 17px; }
.date-mark { fill: #c03030; font-size: 17px; }
.date-cur { fill: #c8c8e8; font-size: 17px; }

.tab-row {
  display: flex;
  height: 25px;
  border-top: 2px solid #a00000;
  box-sizing: border-box;
  font-size: 18px;
  white-space: nowrap;
}
.tab-row.second { height: 27px; border-bottom: 2px solid #a00000; }
.tab-row span {
  padding: 0 6px;
  line-height: 22px;
  border-right: 2px solid #a00000;
}
.tab-row .cyan { color: #54fcfc; }
.tab-row .gold { color: #c8b400; }

.quote {
  width: 334px;
  flex: none;
  background: #000;
}
.quote-head {
  height: 82px;
  border-bottom: 2px solid #a00000;
  box-sizing: content-box;
}
.quote-name {
  display: flex;
  align-items: baseline;
  height: 46px;
  padding: 0 0 0 53px;
  line-height: 50px;
}
.quote-name b { color: #00f0f0; font-size: 28px; font-weight: 700; }
.quote-name span { margin-left: 6px; font-size: 21px; color: #c0c0c0; letter-spacing: 0.4px; }
.quote-price {
  display: flex;
  height: 36px;
  align-items: center;
  padding-left: 4px;
  font-size: 27px;
  color: #00e000;
  font-family: "Liberation Sans", sans-serif;
}
.quote-price .chg { margin-left: 64px; }
.quote-price .pct { margin-left: 20px; }

.num {
  font-family: "DejaVu Sans", sans-serif;
  font-weight: 700;
  font-size: 16.5px;
  white-space: nowrap;
}
.num em {
  font-family: "Noto Sans CJK SC", sans-serif;
  font-style: normal;
  font-weight: 400;
  font-size: 23px;
}
.right { text-align: right; }
.green { color: #00e000; }
.gold { color: #c8c800; }
.red { color: #ff3232; }
.white { color: #f4f4f4; }
.gray { color: #c0c0c0; }
.dim { color: #9a9a9a; }
.purple { color: #c000c0; }
.lbl {
  font-family: "Noto Sans CJK SC", sans-serif;
  font-size: 23px;
  color: #c0c0c0;
  white-space: nowrap;
}
.lbl small { font-size: 17px; }
.lbl small.pe { font-size: 19px; }

.book { padding: 2px 3px 0; }
.book-row {
  display: grid;
  grid-template-columns: 119px 60px 1fr;
  align-items: center;
  height: 27px;
  line-height: 27px;
}
.book.sell { height: 135px; padding-top: 0; }
.book.buy { height: 137px; padding-top: 0; }
.book-split { display: flex; height: 2px; margin-bottom: 2px; }
.book-split i { height: 2px; }
.book-split i:first-child { width: 181px; background: #b87818; }
.book-split i:last-child { flex: 1; background: #2a7ab8; }

.stats {
  height: 142px;
  border-top: 2px solid #a00000;
  padding: 0 3px;
  box-sizing: content-box;
}
.stat-row {
  display: grid;
  grid-template-columns: 60px 100px 60px 1fr;
  column-gap: 0;
  align-items: center;
  height: 28.4px;
  line-height: 28px;
}
.stat-row .lbl:nth-child(3) { margin-left: 8px; }
.stats.finance { height: 91px; padding-top: 2px; }

.flows {
  height: 118px;
  border-top: 2px solid #a00000;
  padding: 0 3px;
}
.flow-row {
  display: grid;
  grid-template-columns: 138px 36px 92px 1fr;
  align-items: center;
  height: 28.5px;
  line-height: 28px;
}
.flow-bar { display: block; height: 10px; background: #00e000; }

.trades {
  border-top: 2px solid #a00000;
  padding: 0 3px;
}
.trade-row {
  display: grid;
  grid-template-columns: 115px 60px 75px 31px 47px;
  height: 27px;
  line-height: 27px;
  align-items: center;
}
.bs { padding-left: 17px; font-weight: 400; font-size: 17px; }

.side {
  flex: 1;
  display: flex;
  flex-direction: column;
  align-items: center;
  background: #f0f0f0;
  margin-top: -2px;
  padding-left: 1px;
  box-sizing: border-box;
}
.side-icon {
  flex: none;
  width: 24px;
  height: 24px;
  margin: 5.15px 0;
}
.side-sep {
  width: 26px;
  height: 2px;
  margin: 6px 0;
  background: #b8b8b8;
  border: none;
  flex: none;
}
.side-txt {
  flex: none;
  height: 34.5px;
  line-height: 34px;
  font-size: 17px;
  color: #2a52a8;
}
.side-txt.current {
  width: 32px;
  height: 34px;
  margin: 1px 0 1px;
  text-align: center;
  background: #fafafa;
  border-top: 2px solid #c8c8c8;
  border-left: 1px solid #c8c8c8;
  border-right: 1px solid #c8c8c8;
  box-sizing: border-box;
}

.status {
  display: flex;
  align-items: center;
  height: 35px;
  background: #f0f0f0;
  font-size: 21px;
  white-space: nowrap;
}
.status-chip {
  display: flex;
  align-items: center;
  justify-content: center;
  width: 19px;
  height: 24px;
  margin-left: 3px;
  background: #e8a020;
  border: 1px solid #c08018;
  box-sizing: border-box;
}
.status-chip i { display: block; width: 9px; height: 10px; background: #fbe8a0; }
.idx { font-size: 24px; color: #333; margin-left: 3px; width: 55px; }
.st { display: inline-block; flex: none; }
.st.up { color: #0a7a1a; }
.st.k { color: #111; }
.st.w95 { width: 95px; }
.st.w80 { width: 80px; }
.st em { font-style: normal; font-size: 24px; color: #333; font-family: "Noto Sans CJK SC", sans-serif; }

.watermark {
  position: absolute;
  left: 1080px;
  top: 1286px;
  width: 1080px;
  height: 109px;
  display: flex;
  align-items: center;
  background: #7fa9d6;
  white-space: nowrap;
}
.wm-name {
  margin-left: 20px;
  width: 380px;
  font-family: "Noto Sans CJK SC", sans-serif;
  font-weight: 900;
  font-size: 75px;
  line-height: 1;
  color: #1a0a8c;
}
.wm-logo { margin-left: 30px; flex: none; }
.wm-url {
  margin-left: 38px;
  font-family: "DejaVu Serif", serif;
  font-weight: 900;
  font-size: 82px;
  line-height: 1;
  letter-spacing: -3px;
  color: #fbfdff;
  margin-top: -18px;
}
</style>

<style>
html, body { margin: 0; background: #000; }
</style>
